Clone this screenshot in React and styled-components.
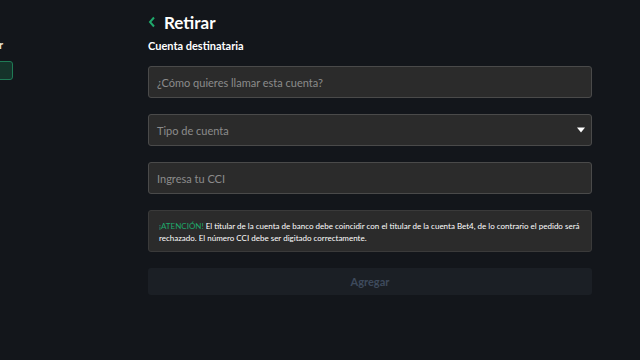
import React from 'react';
import styled, { createGlobalStyle } from 'styled-components';

const GlobalStyle = createGlobalStyle`
  html, body {
    margin: 0;
    padding: 0;
    background: #13161b;
    font-family: Lato, 'Open Sans', sans-serif;
    color: #fff;
  }
  * { box-sizing: border-box; }
`;

const Page = styled.div`
  display: flex;
  width: 640px;
  height: 360px;
  overflow: hidden;
  background: #13161b;
`;

const Sidebar = styled.aside`
  width: 148px;
  flex-shrink: 0;
  overflow: hidden;
  display: flex;
  flex-direction: column;
  padding-top: 38px;
`;

const SideInner = styled.div`
  width: 13px;
  overflow: hidden;
  display: flex;
  flex-direction: column;
  align-items: flex-end;
  gap: 9px;
`;

const SideLabel = styled.span`
  font-size: 11px;
  font-weight: 700;
  color: #e8e2d4;
  white-space: nowrap;
  padding-right: 10px;
  line-height: 14px;
`;

const SideButton = styled.div`
  width: 80px;
  height: 19px;
  flex-shrink: 0;
  border: 1px solid #1f7a55;
  border-radius: 3px;
  background: #15332a;
`;

const Main = styled.main`
  width: 444px;
  display: flex;
  flex-direction: column;
  padding-top: 11px;
`;

const TitleRow = styled.div`
  display: flex;
  align-items: center;
  gap: 8px;
  height: 22px;
`;

const Title = styled.h1`
  margin: 0;
  font-size: 17px;
  font-weight: 700;
  color: #fff;
`;

const Subtitle = styled.h2`
  margin: 6px 0 0;
  font-size: 11px;
  font-weight: 700;
  color: #fff;
  line-height: 14px;
`;

const Form = styled.div`
  display: flex;
  flex-direction: column;
  gap: 16px;
  margin-top: 13px;
`;

const Field = styled.div`
  position: relative;
  height: 32px;
  border: 1px solid #4a4a4a;
  border-radius: 3px;
  background: #2b2b2b;
  display: flex;
  align-items: center;
  padding: 0 8px;
  font-size: 11px;
  color: #8b8b8b;
`;

const Caret = styled.span`
  position: absolute;
  right: 6px;
  top: 50%;
  transform: translateY(-50%);
  width: 0;
  height: 0;
  border-left: 4px solid transparent;
  border-right: 4px solid transparent;
  border-top: 5px solid #fff;
`;

const Notice = styled.div`
  height: 42px;
  border: 1px solid #3a3a3a;
  border-radius: 3px;
  background: #2b2b2b;
  padding: 9px 10px 0;
  font-size: 8px;
  line-height: 12px;
  color: #fff;
`;

const Alert = styled.span`
  color: #1fa86b;
`;

const AddButton = styled.button`
  height: 27px;
  border: none;
  border-radius: 3px;
  background: #1b1f25;
  color: #3e4a5c;
  font-family: inherit;
  font-size: 11px;
  font-weight: 700;
`;

export default function App() {
  return (
    <>
      <GlobalStyle />
      <Page>
        <Sidebar>
          <SideInner>
            <SideLabel>Retirar</SideLabel>
            <SideButton />
          </SideInner>
        </Sidebar>
        <Main>
          <TitleRow>
            <svg width="8" height="12" viewBox="0 0 8 12">
              <path d="M6 1.5 L2 6 L6 10.5" fill="none" stroke="#1fa86b" strokeWidth="2" />
            </svg>
            <Title>Retirar</Title>
          </TitleRow>
          <Subtitle>Cuenta destinataria</Subtitle>
          <Form>
            <Field>¿Cómo quieres llamar esta cuenta?</Field>
            <Field>
              Tipo de cuenta
              <Caret />
            </Field>
            <Field>Ingresa tu CCI</Field>
            <Notice>
              <Alert>¡ATENCIÓN!</Alert> El titular de la cuenta de banco debe coincidir con el titular de la cuenta Bet4, de lo contrario el pedido será rechazado. El número CCI debe ser digitado correctamente.
            </Notice>
            <AddButton>Agregar</AddButton>
          </Form>
        </Main>
      </Page>
    </>
  );
}
